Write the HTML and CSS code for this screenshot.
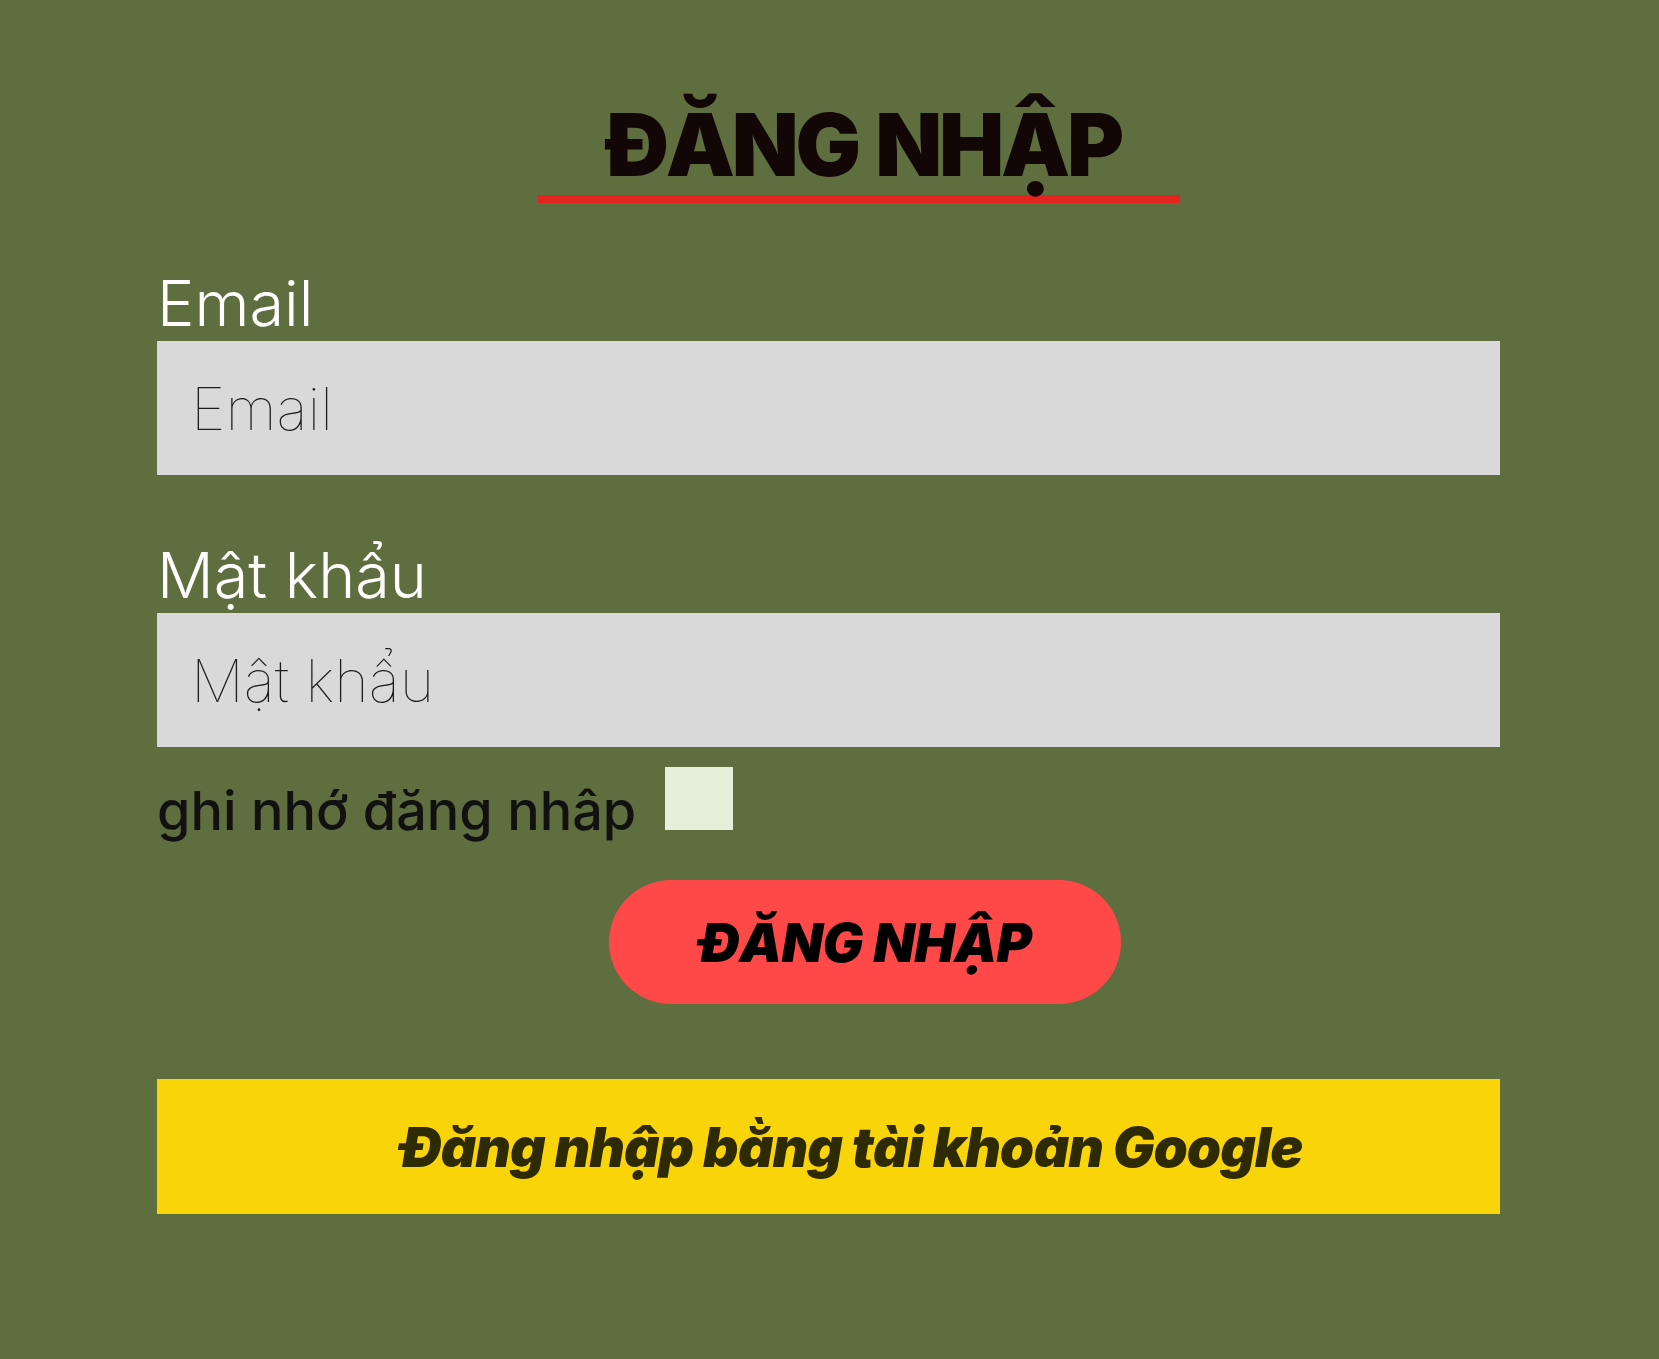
FILE: index.html
```html
<!DOCTYPE html>
<html lang="vi">
<head>
<meta charset="utf-8">
<title>Đăng nhập</title>
<link rel="stylesheet" href="styles.css">
</head>
<body>
<main class="login">
  <div class="title-row">
    <h1 class="title">ĐĂNG NHẬP</h1>
  </div>
  <form class="form">
    <label class="field-label" for="email">Email</label>
    <input class="field-input" id="email" type="email" placeholder="Email">
    <label class="field-label field-label-pass" for="pass">Mật khẩu</label>
    <input class="field-input" id="pass" type="password" placeholder="Mật khẩu">
    <div class="remember">
      <label for="remember">ghi nhớ đăng nhâp</label>
      <input class="check" id="remember" type="checkbox">
    </div>
    <div class="submit-row">
      <button class="submit" type="button">ĐĂNG NHẬP</button>
    </div>
    <button class="google" type="button">Đăng nhập bằng tài khoản Google</button>
  </form>
</main>
</body>
</html>
```

FILE: styles.css
```css
* { box-sizing: border-box; }
html, body {
  margin: 0;
  padding: 0;
  background: #5e6e3e;
  font-family: Inter, "Noto Sans", sans-serif;
}
.login {
  width: 1343px;
  margin-left: 157px;
  padding-top: 101px;
}
.title-row {
  display: flex;
  justify-content: center;
}
.title {
  margin: 0 0 0 60px;
  width: 643px;
  text-align: center;
  font-size: 87px;
  font-weight: 900;
  line-height: 1;
  letter-spacing: -3.2px;
  word-spacing: 3px;
  color: #120606;
  padding: 0 0 7px 10px;
  border-bottom: 8px solid #e52420;
}
.form {
  display: flex;
  flex-direction: column;
  margin-top: 62px;
}
.field-label {
  font-size: 63px;
  font-weight: 300;
  color: #ffffff;
  line-height: normal;
}
.field-label-pass {
  margin-top: 62px;
}
.field-input {
  width: 100%;
  height: 134px;
  border: none;
  outline: none;
  background: #d9d9d9;
  padding: 0 0 0 34px;
  font-family: Inter, "Noto Sans", sans-serif;
  font-size: 59px;
  font-weight: 100;
  color: #1e1e1e;
}
.field-input::placeholder {
  color: #1e1e1e;
  opacity: 1;
}
.remember {
  margin-top: 17px;
  font-size: 54px;
  font-weight: 500;
  color: #111111;
  line-height: normal;
}
.check {
  appearance: none;
  -webkit-appearance: none;
  width: 68px;
  height: 63px;
  margin: 3px 3px 0 14px;
  background: #e3efd9;
  border: none;
  vertical-align: baseline;
}
.submit-row {
  display: flex;
  justify-content: center;
  margin-top: 37px;
}
.submit {
  margin-left: 72px;
  width: 512px;
  height: 124px;
  border: none;
  border-radius: 62px;
  background: #ff4848;
  color: #000000;
  font-family: Inter, "Noto Sans", sans-serif;
  font-size: 54px;
  font-weight: 900;
  font-style: italic;
  letter-spacing: -0.5px;
}
.google {
  margin-top: 75px;
  width: 100%;
  height: 135px;
  border: none;
  background: #f8d408;
  color: #2e2a04;
  padding-left: 50px;
  font-family: Inter, "Noto Sans", sans-serif;
  font-size: 55px;
  font-weight: 900;
  font-style: italic;
  letter-spacing: -1px;
}
```
